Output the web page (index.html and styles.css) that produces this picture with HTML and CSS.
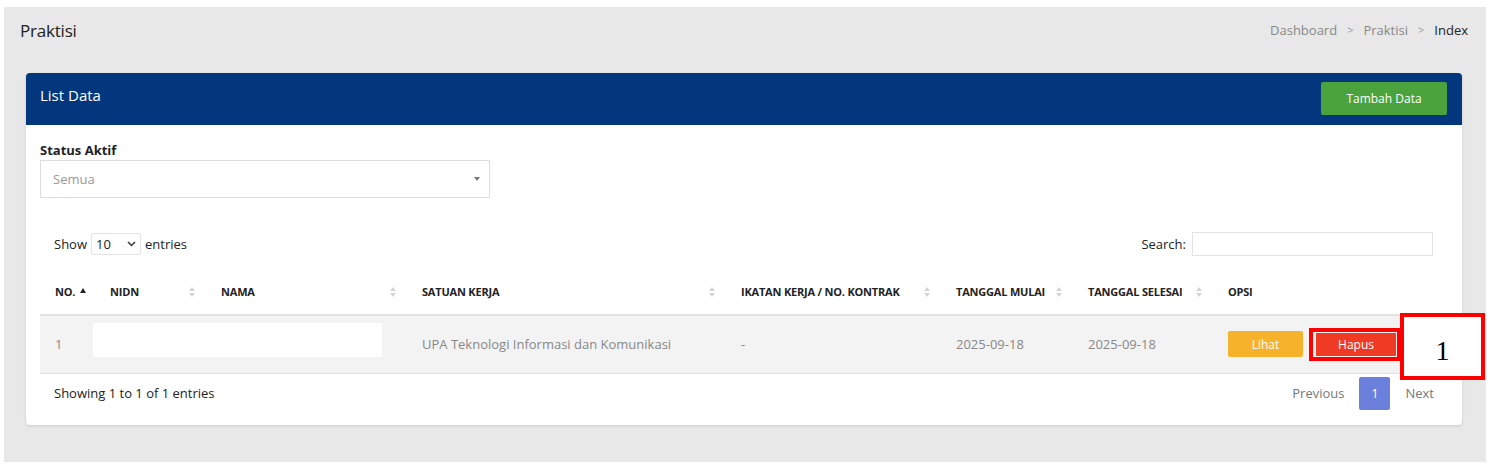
FILE: index.html
```html
<!DOCTYPE html>
<html>
<head>
<meta charset="utf-8">
<link rel="stylesheet" href="styles.css">
</head>
<body>
<div class="page">
  <div class="topbar">
    <h1 class="title">Praktisi</h1>
    <div class="crumbs"><span>Dashboard</span><span class="sep">&gt;</span><span>Praktisi</span><span class="sep">&gt;</span><span class="cur">Index</span></div>
  </div>
  <div class="card">
    <div class="card-head">
      <div class="card-title">List Data</div>
      <button class="btn btn-green">Tambah Data</button>
    </div>
    <div class="card-body">
      <label class="flabel">Status Aktif</label>
      <div class="fselect"><span>Semua</span><span class="caret"></span></div>
      <div class="dt-top">
        <div class="len">Show <span class="lensel">10 <svg width="9" height="6" viewBox="0 0 9 6"><path d="M1 1l3.5 3.5L8 1" fill="none" stroke="#333" stroke-width="1.5"/></svg></span> entries</div>
        <div class="search">Search: <span class="sinput"></span></div>
      </div>
      <table class="tbl">
        <colgroup>
          <col style="width:55px"><col style="width:111px"><col style="width:201px"><col style="width:319px"><col style="width:215px"><col style="width:132px"><col style="width:140px"><col style="width:234px">
        </colgroup>
        <thead>
          <tr>
            <th><span class="up">NO.</span><span class="asc"></span></th>
            <th>NIDN<span class="sort"></span></th>
            <th>NAMA<span class="sort"></span></th>
            <th>SATUAN KERJA<span class="sort"></span></th>
            <th>IKATAN KERJA / NO. KONTRAK<span class="sort"></span></th>
            <th>TANGGAL MULAI<span class="sort"></span></th>
            <th>TANGGAL SELESAI<span class="sort"></span></th>
            <th>OPSI</th>
          </tr>
        </thead>
        <tbody>
          <tr>
            <td>1</td>
            <td colspan="2" class="redact-cell"><div class="redact"></div></td>
            <td>UPA Teknologi Informasi dan Komunikasi</td>
            <td>-</td>
            <td>2025-09-18</td>
            <td>2025-09-18</td>
            <td class="opsi"><button class="btn btn-yellow">Lihat</button><span class="mark"><button class="btn btn-red">Hapus</button></span></td>
          </tr>
        </tbody>
      </table>
      <div class="dt-bottom">
        <div class="info">Showing 1 to 1 of 1 entries</div>
        <div class="pager"><span class="pg">Previous</span><span class="pg active">1</span><span class="pg">Next</span></div>
      </div>
    </div>
  </div>
  <div class="anno">1</div>
</div>
</body>
</html>
```
FILE: styles.css
```css
* { box-sizing: border-box; }
html, body { margin: 0; padding: 0; background: #fff; }
body { font-family: "Open Sans", "Noto Sans", sans-serif; color: #333; }
.page {
  position: relative;
  margin: 7px 7px 0 4px;
  height: 455px;
  background: #e8e8e8;
  padding: 0 24px 0 22px;
}
.topbar {
  display: flex;
  justify-content: space-between;
  align-items: center;
  height: 46px;
  margin: 0 -6px 0 -6px;
}
.title { margin: 0; font-size: 17px; font-weight: 400; color: #222; letter-spacing: -0.2px; }
.crumbs { font-size: 13px; color: #888; display: flex; gap: 10px; }
.crumbs .sep { color: #999; font-size: 11px; line-height: 18px; }
.crumbs .cur { color: #222; }
.card {
  margin-top: 20px;
  background: #fff;
  border-radius: 4px;
  box-shadow: 0 1px 3px rgba(0,0,0,0.12);
  overflow: hidden;
}
.card-head {
  background: #02377d;
  height: 52px;
  display: flex;
  justify-content: space-between;
  align-items: flex-start;
  padding: 9px 15px 0 14px;
}
.card-title { color: #fff; font-size: 15px; margin-top: 3px; }
.btn {
  font-family: inherit;
  border: none;
  color: #fff;
  font-size: 12px;
  cursor: pointer;
  border-radius: 2px;
}
.btn-green { background: #4aa33c; width: 126px; height: 33px; }
.card-body { padding: 15px 15px 15px 14px; }
.flabel { display: block; font-size: 13px; font-weight: 700; color: #222; line-height: 20px; }
.fselect {
  width: 450px;
  height: 38px;
  border: 1px solid #ddd;
  display: flex;
  align-items: center;
  justify-content: space-between;
  padding: 0 9px 0 12px;
  font-size: 13px;
  color: #999;
}
.caret { width: 0; height: 0; border-left: 3.5px solid transparent; border-right: 3.5px solid transparent; border-top: 4px solid #777; }
.dt-top {
  display: flex;
  justify-content: space-between;
  align-items: center;
  padding: 0 14px;
  margin-top: 34px;
  height: 23px;
  font-size: 13px;
  color: #222;
}
.len { display: flex; align-items: center; gap: 4px; }
.lensel {
  display: inline-flex; align-items: center; justify-content: space-between;
  width: 50px; height: 22px; border: 1px solid #e3e3e3; border-radius: 2px;
  padding: 0 4px; font-size: 13px;
}
.search { display: flex; align-items: center; gap: 6px; }
.sinput { width: 241px; height: 24px; border: 1px solid #e3e3e3; display: inline-block; }
.tbl { width: 1407px; border-collapse: collapse; table-layout: fixed; margin-top: 14px; }
.tbl th {
  position: relative;
  text-align: left;
  font-size: 11px;
  font-weight: 700;
  color: #222;
  padding: 0 15px;
  height: 46px;
  border-bottom: 2px solid #e2e2e2;
  white-space: nowrap;
  letter-spacing: -0.2px;
}
.sort, .asc { position: absolute; right: 10px; top: 18px; width: 7px; height: 10px; }
.sort::before, .sort::after, .asc::before {
  content: ""; position: absolute; left: 0; width: 0; height: 0;
  border-left: 3.5px solid transparent; border-right: 3.5px solid transparent;
}
.sort::before { top: 0; border-bottom: 4px solid #d4d4d4; }
.sort::after { bottom: 0; border-top: 4px solid #d4d4d4; }
.asc { position: relative; display: inline-block; right: auto; top: auto; margin-left: 5px; width: 7px; height: 8px; }
.asc::before { top: 0; border-bottom: 5px solid #222; }
.tbl td {
  background: #f3f3f3;
  height: 58px;
  padding: 0 15px;
  font-size: 13px;
  color: #888;
  border-bottom: 1px solid #e2e2e2;
  white-space: nowrap;
}
.tbl td.redact-cell { padding: 7px 0 0 0; vertical-align: top; }
.redact { width: 289px; height: 34px; background: #fff; margin-left: -2px; }
.tbl td.opsi { display: table-cell; }
.opsi .btn-yellow { background: #f7b22c; width: 75px; height: 26px; vertical-align: middle; }
.mark { display: inline-block; border: 4px solid #f00; padding: 1px 1px 1px 3px; margin-left: 6px; vertical-align: middle; }
.btn-red { background: #f03a24; width: 80px; height: 23px; display: block; border-radius: 0; }
.dt-bottom {
  display: flex; justify-content: space-between; align-items: center;
  padding: 3px 13px 0 14px; font-size: 13px; color: #222;
}
.pager { display: flex; align-items: center; gap: 0; }
.pg { color: #777; padding: 0 12px; line-height: 33px; }
.pg.active { background: #6b7fdd; color: #fff; width: 31px; padding: 0; text-align: center; margin: 0 3px; border-radius: 2px; }
.pg:last-child { padding-right: 0; }
.anno {
  position: absolute;
  left: 1396px; top: 306px;
  width: 85px; height: 67px;
  border: 4px solid #f00;
  background: #fff;
  font-family: "Liberation Serif", serif;
  font-size: 28px;
  color: #000;
  display: flex; align-items: center; justify-content: center;
  padding-top: 8px;
}
```
